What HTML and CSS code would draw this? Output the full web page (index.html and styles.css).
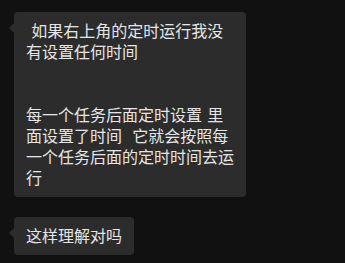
FILE: index.html
```html
<!DOCTYPE html>
<html>
<head>
<meta charset="utf-8">
<link rel="stylesheet" href="styles.css">
</head>
<body>
<div class="chat">
  <div class="bubble wide"> 如果右上角的定时运行我没有设置任何时间


每一个任务后面定时设置 里面设置了时间  它就会按照每一个任务后面的定时时间去运行</div>
  <div class="bubble">这样理解对吗</div>
</div>
</body>
</html>
```
FILE: styles.css
```css
html, body {
  margin: 0;
  padding: 0;
  background: #111111;
  width: 345px;
  height: 263px;
  overflow: hidden;
}
.chat {
  display: flex;
  flex-direction: column;
  align-items: flex-start;
  gap: 20px;
  padding: 12px 0 0 14px;
}
.bubble {
  position: relative;
  background: #2c2c2c;
  color: #e6e6e6;
  font-family: "Noto Sans CJK SC", "Microsoft YaHei", sans-serif;
  font-size: 16px;
  line-height: 21px;
  padding: 8px 12px 9px 12px;
  border-radius: 4px;
  white-space: pre-wrap;
  word-spacing: 1.6px;
}
.bubble.wide {
  width: 208px;
}
.bubble::before {
  content: "";
  position: absolute;
  left: -5px;
  top: 11px;
  border-top: 5px solid transparent;
  border-bottom: 5px solid transparent;
  border-right: 5px solid #2c2c2c;
}
```
